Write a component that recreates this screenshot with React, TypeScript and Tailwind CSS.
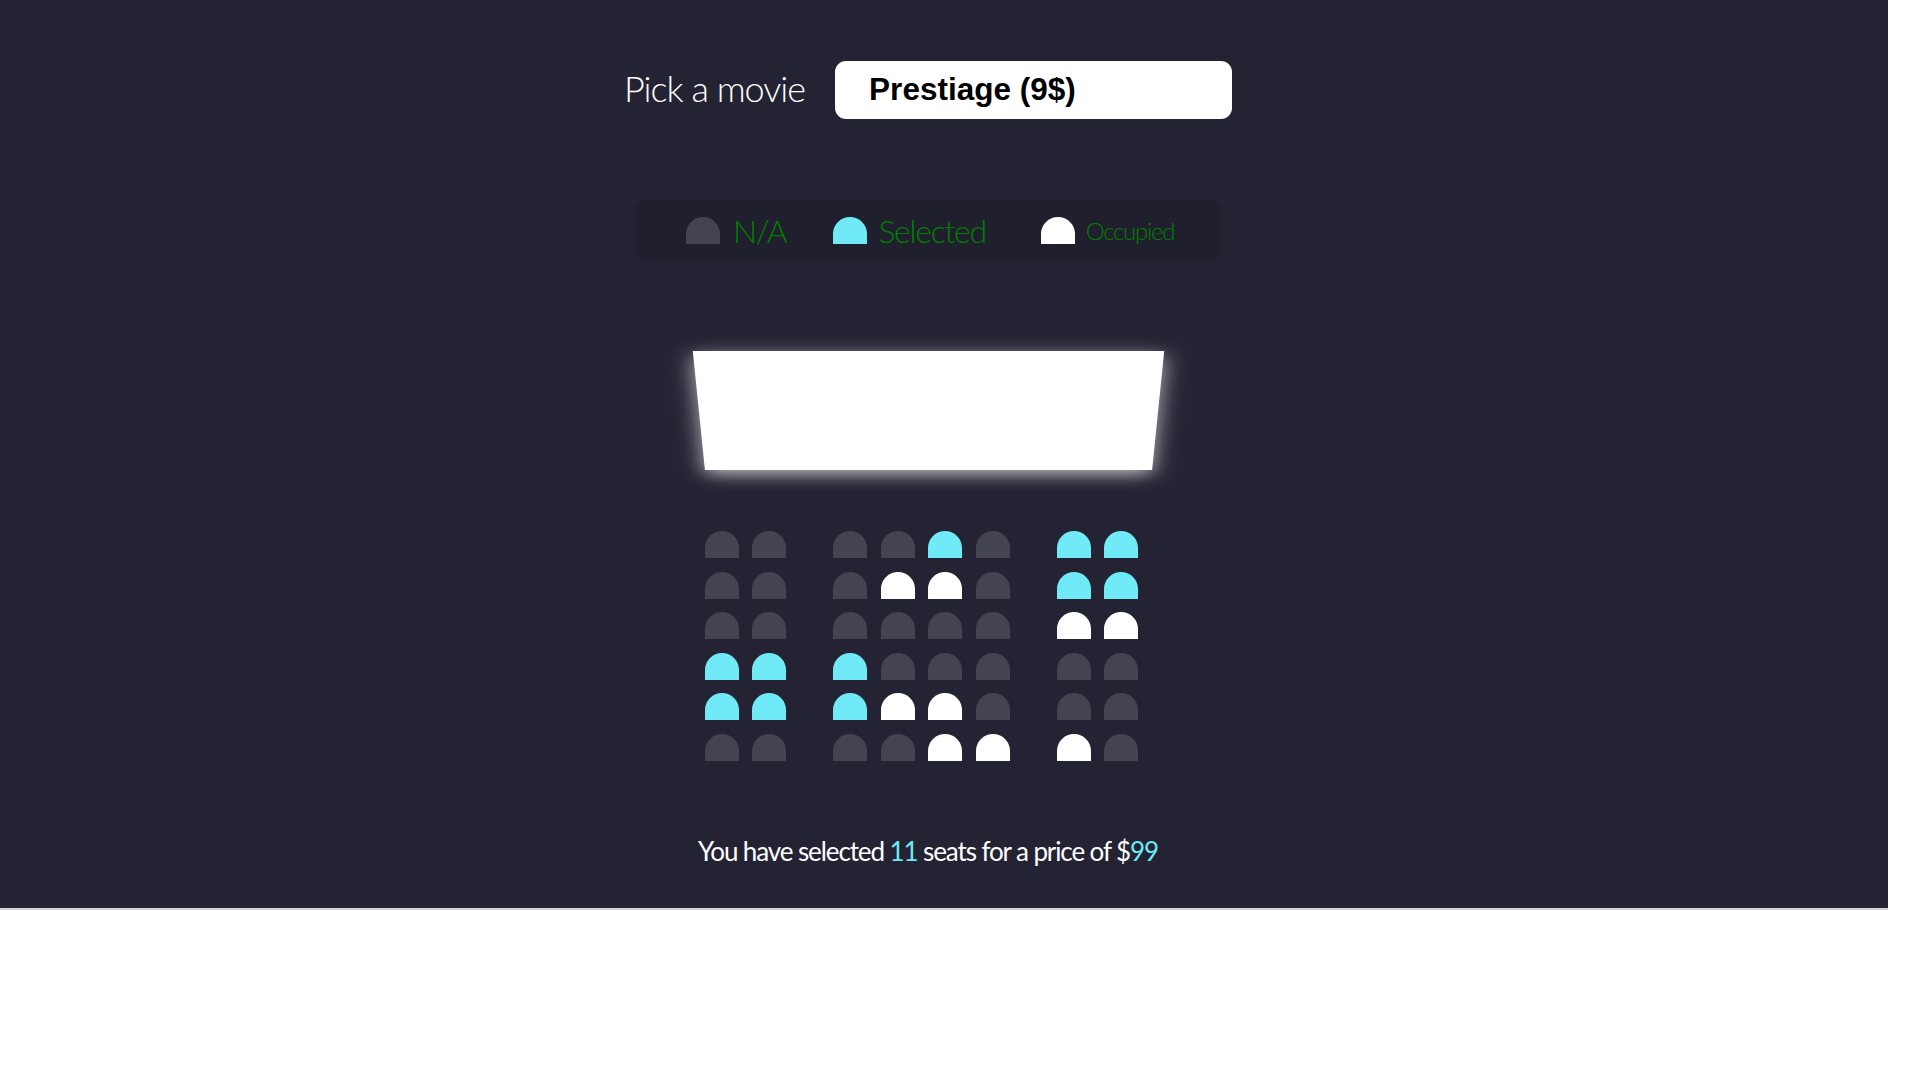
import React from "react";

type SeatKind = "na" | "sel" | "occ";

const N: SeatKind = "na";
const S: SeatKind = "sel";
const O: SeatKind = "occ";

const rows: SeatKind[][] = [
  [N, N, N, N, S, N, S, S],
  [N, N, N, O, O, N, S, S],
  [N, N, N, N, N, N, O, O],
  [S, S, S, N, N, N, N, N],
  [S, S, S, O, O, N, N, N],
  [N, N, N, N, O, O, O, N],
];

const seatColor: Record<SeatKind, string> = {
  na: "bg-[#444451]",
  sel: "bg-[#6feaf6]",
  occ: "bg-white",
};

function Seat({ kind, className = "" }: { kind: SeatKind; className?: string }) {
  return <div className={`h-[27px] w-[34px] shrink-0 rounded-t-full ${seatColor[kind]} ${className}`} />;
}

export default function App() {
  const selected = rows.flat().filter((s) => s === "sel").length;
  const price = 9;

  return (
    <div className="min-h-screen bg-white font-['Lato','Liberation_Sans',sans-serif]">
      <div className="h-[908px] w-[1888px] bg-[#242333]">
        <div className="flex w-[1856px] flex-col items-center pt-[61px]">
          {/* movie picker */}
          <div className="flex items-center">
            <span className="mb-[4px] text-[36px] font-light leading-none tracking-[-1px] text-white">Pick a movie</span>
            <div className="ml-[30px] flex h-[58px] w-[397px] items-center rounded-[11px] bg-white pl-[34px] font-['Liberation_Sans',Arial,sans-serif] text-[31.5px] font-bold text-black">
              Prestiage (9$)
            </div>
          </div>

          {/* legend */}
          <ul className="mt-[81px] flex h-[61px] w-[586px] items-center rounded-[11px] bg-black/10 pl-[51px] font-light tracking-[-1.3px] text-[#008000]">
            <li className="flex items-center gap-[13px]">
              <Seat kind="na" />
              <span className="text-[32px] leading-none">N/A</span>
            </li>
            <li className="ml-[47px] flex items-center gap-[11px]">
              <Seat kind="sel" />
              <span className="text-[32px] leading-none">Selected</span>
            </li>
            <li className="ml-[55px] flex items-center gap-[11px]">
              <Seat kind="occ" />
              <span className="text-[24px] leading-none">Occupied</span>
            </li>
          </ul>

          {/* screen + seats */}
          <div className="mt-[67px] w-[459px]">
            <div className="h-[168px] w-full bg-white shadow-[0_7px_22px_rgba(255,255,255,0.7)] [transform:perspective(2250px)_rotateX(-45deg)]" />

            <div className="mt-[35px] flex flex-col gap-[13.5px] pl-[6px]">
              {rows.map((row, r) => (
                <div key={r} className="flex">
                  {row.map((kind, c) => (
                    <Seat
                      key={c}
                      kind={kind}
                      className={c === 0 ? "" : c === 2 || c === 6 ? "ml-[47px]" : "ml-[13.5px]"}
                    />
                  ))}
                </div>
              ))}
            </div>
          </div>

          {/* summary */}
          <p className="mt-[77px] text-[26px] leading-none tracking-[-1.1px] text-white">
            You have selected <span className="text-[#6feaf6]">{selected}</span> seats for a price of $
            <span className="text-[#6feaf6]">{selected * price}</span>
          </p>
        </div>
      </div>
      <div className="h-[2px] w-[1888px] bg-[#d4d4d4]" />
    </div>
  );
}
